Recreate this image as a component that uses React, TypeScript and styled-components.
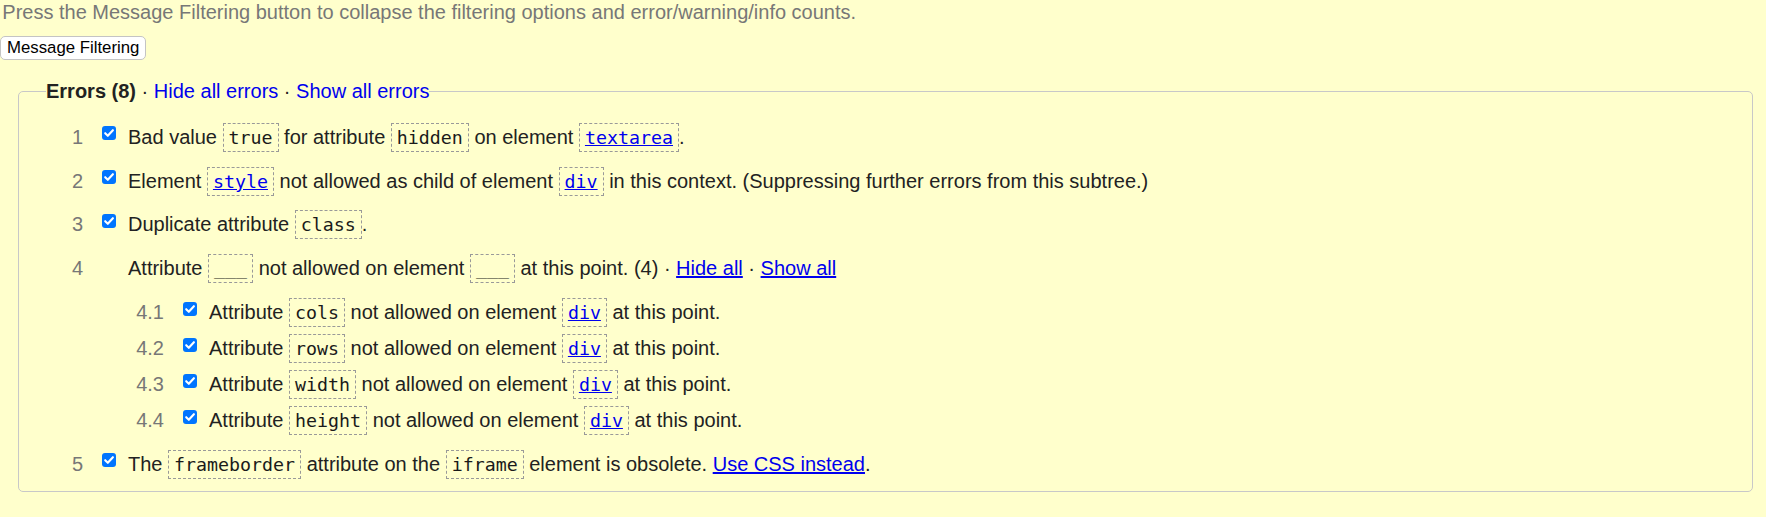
import React from "react";
import styled, { createGlobalStyle } from "styled-components";

const GlobalStyle = createGlobalStyle`
  html, body {
    margin: 0;
    padding: 0;
    background: #ffffcc;
  }
  body {
    font-family: "Liberation Sans", Arial, sans-serif;
    font-size: 20px;
    color: #222;
  }
`;

const Page = styled.div`
  width: 1766px;
`;

const Intro = styled.p`
  margin: 0;
  padding: 1px 0 0 2.3px;
  line-height: 23px;
  color: #777;
`;

const FilterButton = styled.button`
  display: block;
  margin: 12px 0 0 0;
  height: 24px;
  padding: 0 6px;
  box-sizing: border-box;
  font-family: "Liberation Sans", Arial, sans-serif;
  font-size: 16.8px;
  line-height: 22px;
  color: #000;
  background: #fff;
  border: 1px solid #c4c4c4;
  border-radius: 5px;
`;

const Fieldset = styled.fieldset`
  margin: 19.6px 13px 0 18px;
  padding: 23.3px 0 15.5px 0;
  border: 1px solid #c8c8c8;
  border-radius: 5px;
  min-width: 0;
`;

const Legend = styled.legend`
  margin-left: 27px;
  padding: 0;
  line-height: 23px;
  color: #222;
`;

const LegendTitle = styled.strong`
  font-weight: bold;
`;

const Link = styled.a<{ $plain?: boolean }>`
  color: #0000ee;
  text-decoration: ${(p) => (p.$plain ? "none" : "underline")};
  cursor: pointer;
`;

const List = styled.ol<{ $sub?: boolean }>`
  list-style: none;
  margin: ${(p) => (p.$sub ? "21px 0 0 0" : "0")};
  padding: 0 0 0 ${(p) => (p.$sub ? "85px" : "24px")};
  display: flex;
  flex-direction: column;
  gap: ${(p) => (p.$sub ? "13px" : "20.75px")};
`;

const Row = styled.li`
  line-height: 23px;
  white-space: nowrap;
`;

const Num = styled.span<{ $sub?: boolean }>`
  display: inline-block;
  width: ${(p) => (p.$sub ? "36px" : "40px")};
  text-align: right;
  color: #777;
`;

const CheckBox = styled.span`
  display: inline-block;
  width: 14px;
  height: 14px;
  margin: 0 12.2px 3.5px 18.8px;
  border-radius: 3px;
  background: #0075ff;
  vertical-align: baseline;

  svg {
    display: block;
  }
`;

const CheckSpacer = styled.span`
  display: inline-block;
  width: 45px;
`;

const Code = styled.code`
  font-family: "DejaVu Sans Mono", "Liberation Mono", monospace;
  font-size: 18.3px;
  padding: 3px 5px;
  border: 1px dashed #999;
  color: #1a1a1a;
`;

const CodeLink = styled.a`
  color: #0000ee;
  text-decoration: underline;
`;

function Check() {
  return (
    <CheckBox role="checkbox" aria-checked="true">
      <svg width="14" height="14" viewBox="0 0 14 14">
        <path
          d="M3.2 7.2 L5.8 9.8 L10.9 4.2"
          fill="none"
          stroke="#fff"
          strokeWidth="2.1"
          strokeLinecap="round"
          strokeLinejoin="round"
        />
      </svg>
    </CheckBox>
  );
}

type SubItem = { n: string; attr: string };

const subItems: SubItem[] = [
  { n: "4.1", attr: "cols" },
  { n: "4.2", attr: "rows" },
  { n: "4.3", attr: "width" },
  { n: "4.4", attr: "height" },
];

export default function App() {
  return (
    <Page>
      <GlobalStyle />
      <Intro>
        Press the Message Filtering button to collapse the filtering options and error/warning/info counts.
      </Intro>
      <FilterButton type="button">Message Filtering</FilterButton>
      <Fieldset>
        <Legend>
          <LegendTitle>Errors (8)</LegendTitle> · <Link $plain>Hide all errors</Link> ·{" "}
          <Link $plain>Show all errors</Link>
        </Legend>
        <List>
          <Row>
            <Num>1</Num>
            <Check />
            Bad value <Code>true</Code> for attribute <Code>hidden</Code> on element{" "}
            <Code>
              <CodeLink>textarea</CodeLink>
            </Code>
            .
          </Row>
          <Row>
            <Num>2</Num>
            <Check />
            Element{" "}
            <Code>
              <CodeLink>style</CodeLink>
            </Code>{" "}
            not allowed as child of element{" "}
            <Code>
              <CodeLink>div</CodeLink>
            </Code>{" "}
            in this context. (Suppressing further errors from this subtree.)
          </Row>
          <Row>
            <Num>3</Num>
            <Check />
            Duplicate attribute <Code>class</Code>.
          </Row>
          <Row>
            <Num>4</Num>
            <CheckSpacer />
            Attribute <Code>___</Code> not allowed on element <Code>___</Code> at this point. (4) ·{" "}
            <Link>Hide all</Link> · <Link>Show all</Link>
            <List $sub>
              {subItems.map((s) => (
                <Row key={s.n}>
                  <Num $sub>{s.n}</Num>
                  <Check />
                  Attribute <Code>{s.attr}</Code> not allowed on element{" "}
                  <Code>
                    <CodeLink>div</CodeLink>
                  </Code>{" "}
                  at this point.
                </Row>
              ))}
            </List>
          </Row>
          <Row>
            <Num>5</Num>
            <Check />
            The <Code>frameborder</Code> attribute on the <Code>iframe</Code> element is obsolete.{" "}
            <Link>Use CSS instead</Link>.
          </Row>
        </List>
      </Fieldset>
    </Page>
  );
}
